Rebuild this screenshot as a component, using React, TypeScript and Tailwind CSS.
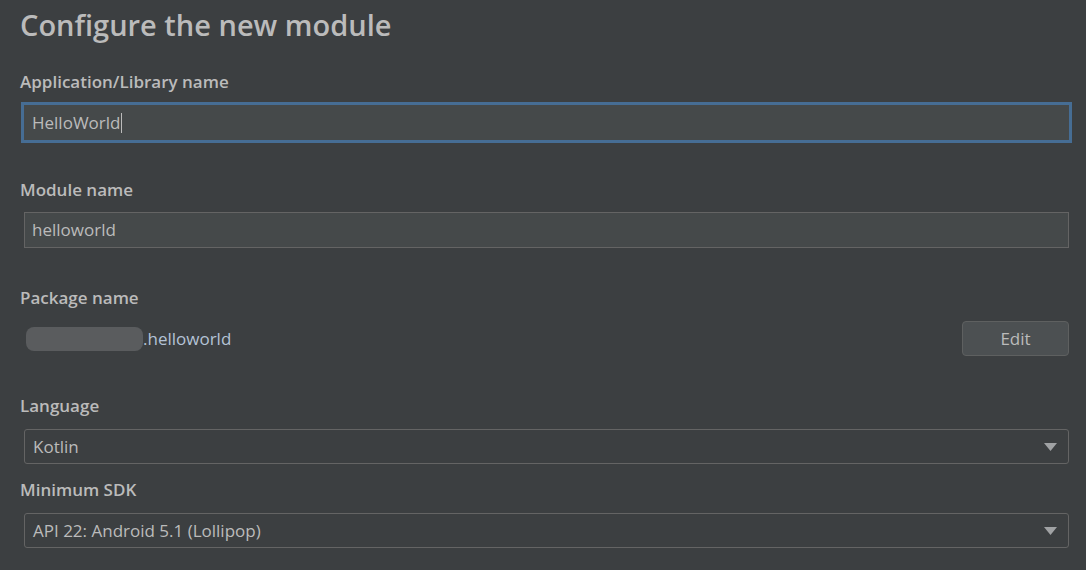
import { ReactNode } from "react"

function Label({ children, className = "" }: { children: ReactNode; className?: string }) {
  return <div className={`text-[17px] leading-[20px] font-semibold text-[#bbbbbb] ${className}`}>{children}</div>
}

function Select({ value, className = "" }: { value: string; className?: string }) {
  return (
    <div
      className={`ml-[4px] mr-[17px] h-[35px] flex items-center justify-between rounded-[3px] border border-[#646464] bg-[#3c3f41] pl-[8px] pr-[11px] ${className}`}
    >
      <span className="text-[17px] text-[#bbbbbb]">{value}</span>
      <svg width="13" height="8" viewBox="0 0 13 8">
        <path d="M0 0 H13 L6.5 8 Z" fill="#a0a2a4" />
      </svg>
    </div>
  )
}

export default function App() {
  return (
    <div
      className="min-h-screen h-[570px] overflow-hidden bg-[#3c3f41] pl-[20px]"
      style={{ fontFamily: '"Open Sans", "Noto Sans", sans-serif' }}
    >
      {/* Title */}
      <h1 className="pt-[7px] text-[29px] leading-[36px] font-semibold text-[#bbbbbb]">Configure the new module</h1>

      {/* App name */}
      <Label className="mt-[29px]">Application/Library name</Label>
      <div className="mt-[10px] ml-[1px] mr-[14px] h-[41px] border-[3px] border-[#466d94] bg-[#45494a] flex items-center pl-[8px]">
        <span className="text-[17px] text-[#bbbbbb]">HelloWorld</span>
        <span className="ml-[1px] h-[20px] w-[1px] bg-[#bbbbbb]" />
      </div>

      {/* Module name */}
      <Label className="mt-[37px]">Module name</Label>
      <div className="mt-[12px] ml-[4px] mr-[17px] h-[36px] border border-[#646464] bg-[#45494a] flex items-center pl-[7px]">
        <span className="text-[17px] text-[#bbbbbb]">helloworld</span>
      </div>

      {/* Package name */}
      <Label className="mt-[40px]">Package name</Label>
      <div className="mt-[13px] mr-[17px] h-[35px] flex items-center justify-between">
        <div className="flex items-center">
          <span className="ml-[6px] h-[24px] w-[117px] rounded-[8px] bg-[#5a5c5e]" />
          <span className="text-[17px] text-[#b4c3d6]">.helloworld</span>
        </div>
        <button className="h-[35px] w-[107px] rounded-[4px] border border-[#5e6060] bg-[#4c5052] text-[17px] text-[#bbbbbb]">
          Edit
        </button>
      </div>

      {/* Language */}
      <Label className="mt-[40px]">Language</Label>
      <Select value="Kotlin" className="mt-[13px]" />

      {/* Minimum SDK */}
      <Label className="mt-[16px]">Minimum SDK</Label>
      <Select value="API 22: Android 5.1 (Lollipop)" className="mt-[13px]" />
    </div>
  )
}
